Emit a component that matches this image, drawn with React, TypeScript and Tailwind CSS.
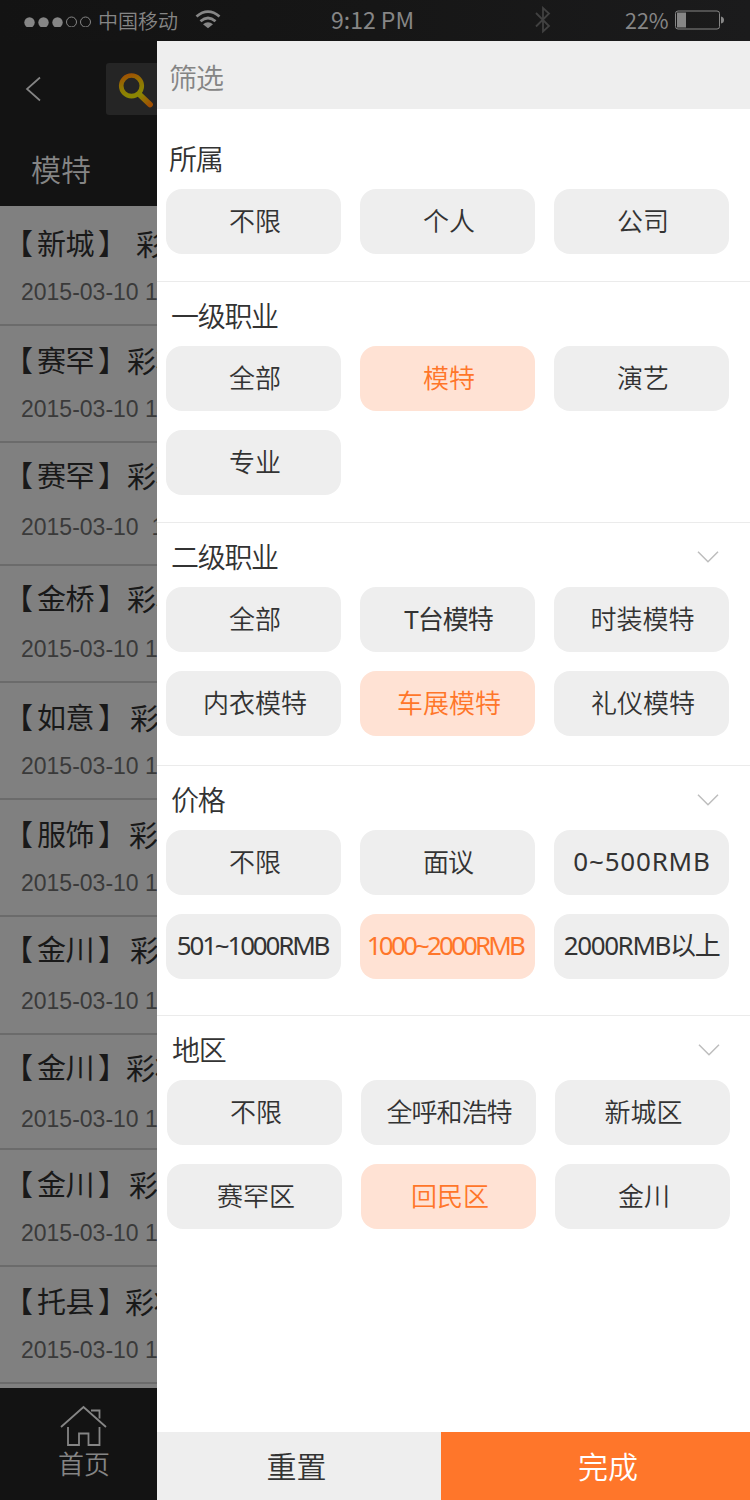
type Chip = { label: string; active?: boolean; tracking?: string };
type Group = { title: string; chips: Chip[]; box: string; head?: string; arrow?: boolean };

const groups: Group[] = [
  {
    title: '所属',
    box: 'pt-5 pb-[27px] pl-[9px]',
    head: 'pl-[3px] pr-[31px]',
    chips: [{ label: '不限' }, { label: '个人' }, { label: '公司' }],
  },
  {
    title: '一级职业',
    box: 'border-t pt-1 pb-[27px] pl-[9px]',
    head: 'pl-[5px] pr-[31px]',
    chips: [{ label: '全部' }, { label: '模特', active: true }, { label: '演艺' }, { label: '专业' }],
  },
  {
    title: '二级职业',
    box: 'border-t pt-1 pb-[29px] pl-[9px]',
    head: 'pl-[5px] pr-[31px]',
    arrow: true,
    chips: [
      { label: '全部' },
      { label: 'T台模特', tracking: 'pl-[2px] tracking-[-1px] font-normal' },
      { label: '时装模特', tracking: 'pl-[2px] font-[350]' },
      { label: '内衣模特' },
      { label: '车展模特', active: true },
      { label: '礼仪模特' },
    ],
  },
  {
    title: '价格',
    box: 'border-t pt-1 pb-9 pl-[9px]',
    head: 'pl-[5px] pr-[31px]',
    arrow: true,
    chips: [
      { label: '不限' },
      { label: '面议', tracking: 'pl-[1px] tracking-[-1px] font-[350]' },
      { label: '0~500RMB', tracking: 'pb-[2px] pl-[1px] tracking-[0.8px] font-normal' },
      { label: '501~1000RMB', tracking: 'pb-[2px] pr-[2px] tracking-[-2.2px] font-normal' },
      { label: '1000~2000RMB', active: true, tracking: 'pb-[2px] pr-[5px] tracking-[-2.85px] font-normal' },
      { label: '2000RMB以上', tracking: 'pb-[2px] pl-0 tracking-[-1.4px] font-normal' },
    ],
  },
  {
    title: '地区',
    box: 'border-t pt-1 pl-[10px]',
    head: 'pl-[5px] pr-[30px]',
    arrow: true,
    chips: [
      { label: '不限' },
      { label: '全呼和浩特', tracking: 'pl-[1px] tracking-[-1px] font-[350]' },
      { label: '新城区', tracking: 'pl-[2px] font-[350]' },
      { label: '赛罕区' },
      { label: '回民区', active: true },
      { label: '金川' },
    ],
  },
];

const rows = [
  { name: '新城', h: 'h-[120px]', pt: 'pt-[16px]', gap: 'pl-[25px]', mid: 'h-[15px]' },
  { name: '赛罕', h: 'h-[117px]', pt: 'pt-[13px]', gap: 'pl-[16px]', mid: 'h-[15px]' },
  { name: '赛罕', h: 'h-[123px]', pt: 'pt-[11px]', gap: 'pl-[16px]', mid: 'h-[18px]', wide: true },
  { name: '金桥', h: 'h-[117px]', pt: 'pt-[11px]', gap: 'pl-[16px]', mid: 'h-[17px]' },
  { name: '如意', h: 'h-[117px]', pt: 'pt-[13px]', gap: 'pl-[19px]', mid: 'h-[15px]' },
  { name: '服饰', h: 'h-[117px]', pt: 'pt-[13px]', gap: 'pl-[18px]', mid: 'h-[15px]' },
  { name: '金川', h: 'h-[118px]', pt: 'pt-[11px]', gap: 'pl-[19px]', mid: 'h-[18px]' },
  { name: '金川', h: 'h-[115px]', pt: 'pt-[11px]', gap: 'pl-[15px]', mid: 'h-[18px]' },
  { name: '金川', h: 'h-[117px]', pt: 'pt-[13px]', gap: 'pl-[18px]', mid: 'h-[15px]' },
  { name: '托县', h: 'h-[117px]', pt: 'pt-[13px]', gap: 'pl-[14px]', mid: 'h-[15px]' },
];

function StatusBar() {
  return (
    <header className="flex h-[41px] shrink-0 items-center bg-gradient-to-r from-[#131313] via-[#161616] to-[#1b1b1c] pb-[2px] text-[#868686]">
      <svg className="ml-[23px] h-[14px] w-[69px] shrink-0" viewBox="0 0 69 14" fill="currentColor" stroke="currentColor">
        <circle cx="6.5" cy="9.5" r="5.2" stroke="none" />
        <circle cx="20.5" cy="9.5" r="5.2" stroke="none" />
        <circle cx="34.5" cy="9.5" r="5.2" stroke="none" />
        <circle cx="48.5" cy="9" r="5" fill="none" />
        <circle cx="62.5" cy="9" r="5" fill="none" />
      </svg>
      <span className="ml-[6px] w-[80px] shrink-0 pt-[3px] text-[20px] leading-[40px] font-[350] whitespace-nowrap">中国移动</span>
      <svg className="ml-[17px] h-[20px] w-[26px] shrink-0" viewBox="0 0 26 20" fill="none" stroke="currentColor" strokeWidth="2.8">
        <path d="M1.5 6.5 Q13 -3.2 24.5 6.5" />
        <path d="M5.5 11.2 Q13 4.8 20.5 11.2" />
        <path d="M13 18.3 L8 14.2 Q13 10.5 18 14.2 Z" fill="currentColor" stroke="none" />
      </svg>
      <span className="ml-[110px] w-[90px] shrink-0 text-[23px] leading-[39px] whitespace-nowrap">9:12 PM</span>
      <svg className="ml-[114px] h-[28px] w-[16px] shrink-0 text-[#414141]" viewBox="0 0 16 28" fill="none" stroke="currentColor" strokeWidth="1.8">
        <path d="M1 7 L14 20 L8 25.5 V2 L14 7.5 L1 20.5" />
      </svg>
      <span className="ml-[74px] w-[50px] shrink-0 text-[21.5px] leading-[39px] whitespace-nowrap">22%</span>
      <svg className="h-[20px] w-[50px] shrink-0" viewBox="0 0 50 20">
        <rect x="0.5" y="1" width="44" height="18" rx="2.5" fill="none" stroke="#868686" />
        <rect x="2" y="2.5" width="9" height="15" fill="#868686" />
        <path d="M46 6.5 Q49 7 49 10 Q49 13 46 13.5 Z" fill="#868686" />
      </svg>
    </header>
  );
}

function Listing() {
  return (
    <aside className="flex w-[157px] shrink-0 flex-col overflow-hidden bg-[#131313] text-[#858585]">
      <div className="flex h-[98px] shrink-0 items-center pb-[2px]">
        <svg className="ml-[25px] h-[26px] w-[16px] shrink-0" viewBox="0 0 16 26" fill="none" stroke="currentColor" strokeWidth="1.7">
          <path d="M15 1.5 L2 13 L15 24.5" />
        </svg>
        <div className="ml-[65px] h-[52px] w-[60px] shrink-0 rounded-[3px] bg-[#252525] pt-[10px] pl-[12px]">
          <svg className="h-[36px] w-[37px]" viewBox="0 0 37 36" fill="none">
            <defs>
              <linearGradient id="lens" x1="0" y1="0" x2="0.3" y2="1">
                <stop offset="0" stopColor="#a04f03" />
                <stop offset="0.55" stopColor="#8f7603" />
                <stop offset="1" stopColor="#8b8603" />
              </linearGradient>
              <linearGradient id="grip" x1="0" y1="0" x2="1" y2="1">
                <stop offset="0" stopColor="#8b8603" />
                <stop offset="1" stopColor="#a04f03" />
              </linearGradient>
            </defs>
            <path d="M22 22 L32 31.5" stroke="url(#grip)" strokeWidth="5.8" strokeLinecap="round" />
            <circle cx="13.5" cy="12.8" r="10.3" stroke="url(#lens)" strokeWidth="4.6" />
          </svg>
        </div>
      </div>
      <div className="h-[67px] shrink-0 pt-[11px] pl-[31px] text-[30px] leading-[36px] font-[350]">模特</div>
      <div className="h-[1182px] shrink-0 bg-[#808080]">
        {rows.map((row, i) => (
          <div key={i} className={`${row.h} ${row.pt} border-b-2 border-[#6b6b6b]`}>
            <div className="flex h-10 w-[220px] items-center text-[29px] leading-10 tracking-[-0.5px] whitespace-nowrap text-[#191919]">
              <span className="ml-[4px] w-[33px]">【</span>
              <span className="w-[61px]">{row.name}</span>
              <span className="w-[13px]">】</span>
              <span className={`${row.gap} pt-[2px]`}>彩妆</span>
            </div>
            <div className={row.mid} />
            <div className="h-[30px] pl-[21px] font-['Liberation_Sans',Arial,sans-serif] text-[23px] leading-[30px] whitespace-pre text-[#3a3a3a]">
              {row.wide ? '2015-03-10  12:30' : '2015-03-10 12:30'}
            </div>
          </div>
        ))}
      </div>
      <nav className="flex grow flex-col pt-[17px]">
        <svg className="ml-[60px] h-[42px] w-[47px] shrink-0" viewBox="0 0 47 42" fill="none" stroke="currentColor" strokeWidth="1.8">
          <path d="M1 22 L23.5 2 L46 22" />
          <path d="M31 5.5 H39.5 V13.5" />
          <path d="M8 22 V40 H19 V28.5 H28.5 V40 H39.5 V22" />
        </svg>
        <span className="ml-[58px] text-[26px] leading-[32px] font-[350]">首页</span>
      </nav>
    </aside>
  );
}

function FilterGroup({ group }: { group: Group }) {
  return (
    <section className={`border-[#ebebeb] ${group.box}`}>
      <div className={`flex h-[60px] items-center justify-between pb-px ${group.head}`}>
        <h2 className="text-[28px] font-[350] tracking-[-1.3px]">{group.title}</h2>
        {group.arrow && (
          <svg className="h-[13px] w-[22px]" viewBox="0 0 22 13" fill="none" stroke="#bdbdbd" strokeWidth="1.5">
            <path d="M1 1.8 L11 11.8 L21 1.8" />
          </svg>
        )}
      </div>
      <div className="grid grid-cols-[175px_175px_175px] gap-[19px]">
        {group.chips.map((chip) => (
          <button
            key={chip.label}
            className={`h-[65px] rounded-[16px] text-center text-[26px] whitespace-nowrap ${chip.tracking ?? 'pl-[3px] font-[350]'} ${
              chip.active ? 'bg-[#ffe2d4] text-[#ff762a]' : 'bg-[#eeeeee]'
            }`}
          >
            {chip.label}
          </button>
        ))}
      </div>
    </section>
  );
}

export default function App() {
  return (
    <div className="flex h-[1500px] w-[750px] flex-col overflow-hidden bg-[#131313] font-['Noto_Sans_CJK_SC',sans-serif]">
      <StatusBar />
      <div className="flex min-h-0 grow">
        <Listing />
        <main className="flex w-[593px] flex-col bg-white font-['Noto_Sans','Noto_Sans_CJK_SC',sans-serif] text-[#333333]">
          <div className="flex h-[68px] shrink-0 items-center bg-[#eeeeee] pl-[12px] text-[28px] font-[350] tracking-[-1px] text-[#858585]">
            <h1 className="pt-[5px]">筛选</h1>
          </div>
          <div className="grow">
            {groups.map((group) => (
              <FilterGroup key={group.title} group={group} />
            ))}
          </div>
          <footer className="flex h-[68px] shrink-0 text-[30px] font-[350]">
            <button className="w-[284px] bg-[#eeeeee] pr-[5px]">重置</button>
            <button className="grow bg-[#ff762a] pl-[25px] text-white">完成</button>
          </footer>
        </main>
      </div>
    </div>
  );
}
